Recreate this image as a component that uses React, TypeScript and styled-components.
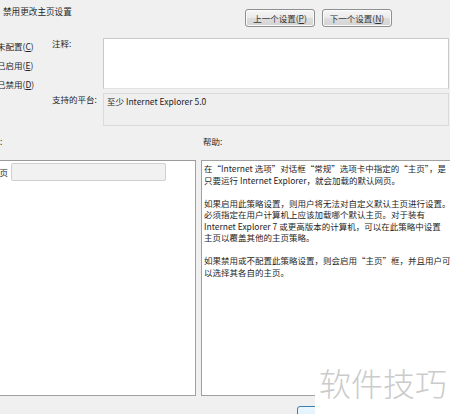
import React from 'react'
import styled, { createGlobalStyle } from 'styled-components'

const GlobalStyle = createGlobalStyle`
  html, body {
    margin: 0;
    padding: 0;
    background: #f0f0f0;
  }
  body {
    font-family: "Noto Sans CJK SC", "Noto Sans", sans-serif;
    color: #262626;
  }
`

const helpParagraphs = [
  ['在“Internet 选项”对话框“常规”选项卡中指定的“主页”，是', '只要运行 Internet Explorer，就会加载的默认网页。'],
  [
    '如果启用此策略设置，则用户将无法对自定义默认主页进行设置。',
    '必须指定在用户计算机上应该加载哪个默认主页。对于装有',
    'Internet Explorer 7 或更高版本的计算机，可以在此策略中设置',
    '主页以覆盖其他的主页策略。',
  ],
  ['如果禁用或不配置此策略设置，则会启用“主页”框，并且用户可', '以选择其各自的主页。'],
]

const App = () => {
  return (
    <Screen>
      <GlobalStyle />
      <Frame lang="zh-CN">
        <Header>
          <Title>禁用更改主页设置</Title>
          <NavButtons>
            <NavButton>上一个设置(<u>P</u>)</NavButton>
            <NavButton>下一个设置(<u>N</u>)</NavButton>
          </NavButtons>
        </Header>

        <SettingsGrid>
          <RadioList>
            <RadioItem>
              <RadioDot />
              <span>未配置(<u>C</u>)</span>
            </RadioItem>
            <RadioItem>
              <RadioDot />
              <span>已启用(<u>E</u>)</span>
            </RadioItem>
            <RadioItem>
              <RadioDot $checked />
              <span>已禁用(<u>D</u>)</span>
            </RadioItem>
          </RadioList>
          <FieldLabel>注释:</FieldLabel>
          <CommentBox />
          <FieldLabel $top={1}>支持的平台:</FieldLabel>
          <PlatformBox>至少 Internet Explorer 5.0</PlatformBox>
        </SettingsGrid>

        <SectionLabels>
          <SectionLabel $left={3}>选项:</SectionLabel>
          <SectionLabel $left={2}>帮助:</SectionLabel>
        </SectionLabels>

        <Panels>
          <OptionsPanel>
            <OptionRow>
              <OptionLabel>主页</OptionLabel>
              <DisabledInput />
            </OptionRow>
          </OptionsPanel>
          <HelpPanel>
            {helpParagraphs.map((para, i) => (
              <HelpParagraph key={i}>
                {para.map((line, j) => (
                  <HelpLine key={j}>{line}</HelpLine>
                ))}
              </HelpParagraph>
            ))}
          </HelpPanel>
        </Panels>

        <Footer>
          <OkButton />
        </Footer>
      </Frame>

      <Watermark>软件技巧</Watermark>
    </Screen>
  )
}

export default App

const Screen = styled.div`
  position: relative;
  width: 450px;
  height: 414px;
  overflow: hidden;
  background: #f0f0f0;
  font-size: 8.5px;
  line-height: 10px;
`
const Frame = styled.div`
  width: 520px;
  margin-left: -20px;
`
const Header = styled.div`
  display: grid;
  grid-template-columns: 265px auto;
  height: 38px;
`
const Title = styled.div`
  padding: 6px 0 0 23px;
  font-size: 8.6px;
`
const NavButtons = styled.div`
  display: flex;
  gap: 7px;
  padding-top: 9px;
  align-items: flex-start;
`
const NavButton = styled.div`
  box-sizing: border-box;
  width: 70px;
  height: 18px;
  border: 1px solid #8e8f8f;
  border-radius: 3px;
  background: linear-gradient(#f6f6f6 0%, #ebebeb 48%, #dddddd 52%, #d4d4d4 100%);
  box-shadow: inset 0 0 0 1px #fbfbfb;
  display: flex;
  align-items: center;
  justify-content: center;
  color: #333;
`
const SettingsGrid = styled.div`
  display: grid;
  grid-template-columns: 72px 51px 346px;
  grid-template-rows: 51px 33px;
  row-gap: 4px;
`
const RadioList = styled.div`
  grid-row: 1 / span 2;
  display: flex;
  flex-direction: column;
  margin-top: -2px;
`
const RadioItem = styled.div`
  height: 19px;
  display: flex;
  align-items: center;
  gap: 4px;
  padding-left: 3px;
`
const RadioDot = styled.span<{ $checked?: boolean }>`
  width: 10px;
  height: 10px;
  box-sizing: border-box;
  border-radius: 50%;
  border: 1px solid #8e8f8f;
  background: ${(p) => (p.$checked ? 'radial-gradient(circle, #2a6fb5 30%, #fff 36%)' : '#fff')};
`
const FieldLabel = styled.div<{ $top?: number }>`
  padding-top: ${(p) => p.$top ?? 0}px;
`
const CommentBox = styled.div`
  box-sizing: border-box;
  border: 1px solid #c9c9c9;
  border-bottom-color: #e3e3e3;
  background: #fff;
`
const PlatformBox = styled.div`
  box-sizing: border-box;
  border: 1px solid #dadada;
  background: #efefef;
  padding: 2px 3px;
`
const SectionLabels = styled.div`
  display: grid;
  grid-template-columns: 216px auto;
  column-gap: 5px;
  height: 34px;
  padding-top: 10px;
  box-sizing: border-box;
`
const SectionLabel = styled.div<{ $left: number }>`
  padding-left: ${(p) => p.$left}px;
`
const Panels = styled.div`
  display: grid;
  grid-template-columns: 216px 1fr;
  column-gap: 5px;
  height: 236px;
`
const OptionsPanel = styled.div`
  box-sizing: border-box;
  background: #fff;
  border: 1px solid #a0a0a0;
  border-top-color: #9a9a9a;
  padding-top: 2px;
`
const OptionRow = styled.div`
  display: flex;
  align-items: center;
  padding-left: 10px;
  gap: 3px;
`
const OptionLabel = styled.span`
  white-space: nowrap;
`
const DisabledInput = styled.div`
  box-sizing: border-box;
  width: 155px;
  height: 18px;
  border: 1px solid #cfcfcf;
  border-radius: 2px;
  background: #f1f1f1;
`
const HelpPanel = styled.div`
  box-sizing: border-box;
  background: #fff;
  border: 1px solid #a0a0a0;
  padding: 2px 2px;
  display: flex;
  flex-direction: column;
  gap: 11.5px;
`
const HelpParagraph = styled.div`
  display: flex;
  flex-direction: column;
`
const HelpLine = styled.div`
  white-space: nowrap;
  line-height: 11.5px;
`
const Footer = styled.div`
  padding: 10px 0 0 317px;
`
const OkButton = styled.div`
  box-sizing: border-box;
  width: 70px;
  height: 18px;
  border: 1px solid #3c7fb1;
  border-radius: 3px;
  background: linear-gradient(#eaf6fd, #d9f0fc);
`
const Watermark = styled.div`
  position: absolute;
  left: 315px;
  top: 356px;
  width: 135px;
  height: 58px;
  background: #fff;
  box-sizing: border-box;
  padding: 4px 0 0 4px;
  font-family: "Noto Sans CJK SC", sans-serif;
  font-weight: 300;
  font-size: 32px;
  line-height: 44px;
  color: #cbcbcb;
  white-space: nowrap;
`
